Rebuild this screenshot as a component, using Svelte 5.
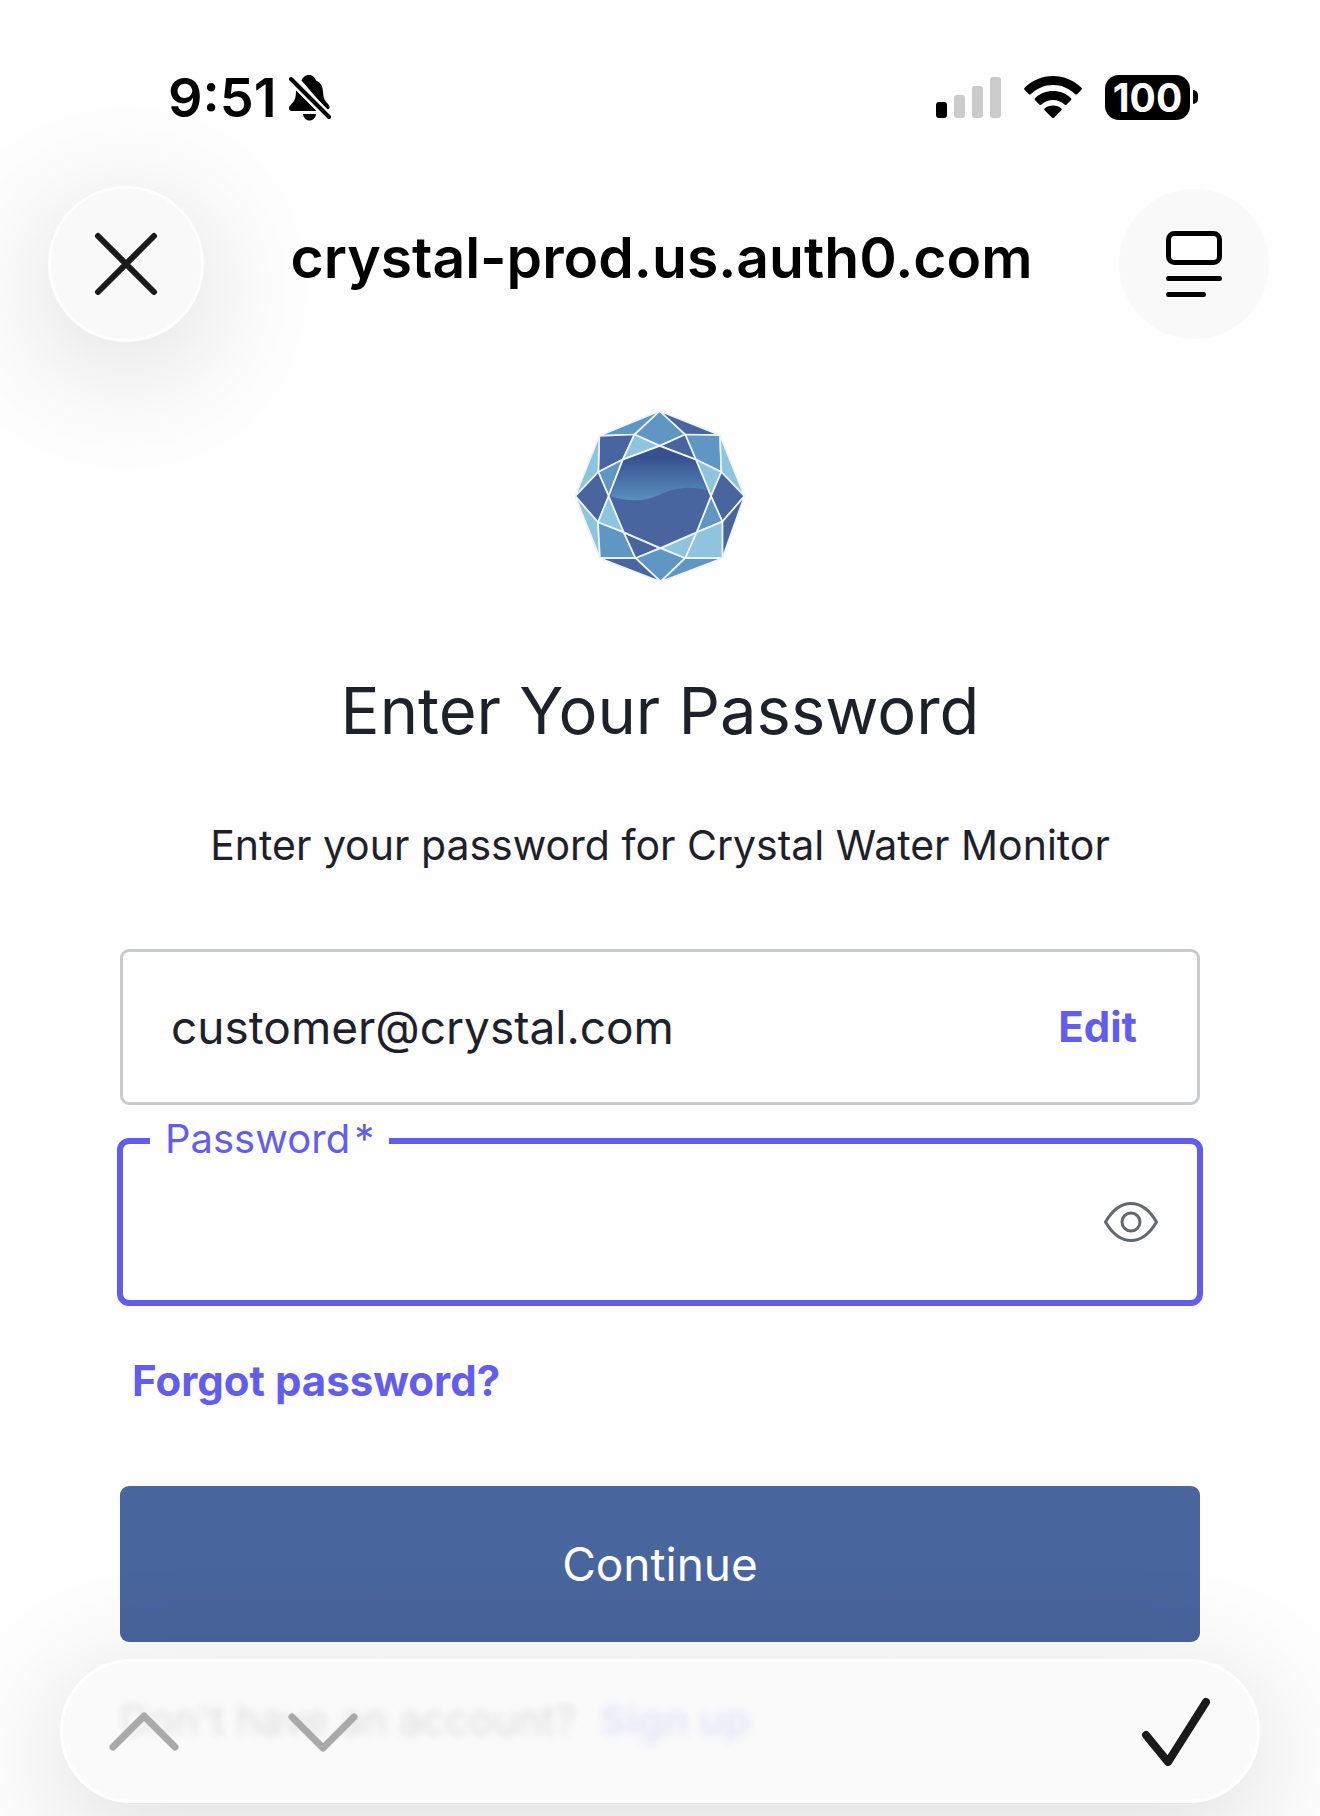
<script lang="ts">
  interface Facet {
    points: string;
    tone: 'deep' | 'mid' | 'pale';
  }

  const facets: Facet[] = [
    // crown
    { points: '300,48 225,118 300,152 376,118', tone: 'mid' },
    { points: '120,122 300,48 225,118', tone: 'mid' },
    { points: '300,48 480,120 376,118', tone: 'deep' },
    { points: '120,122 225,118 190,193 117,230', tone: 'deep' },
    { points: '376,118 480,120 484,230 408,193', tone: 'mid' },
    { points: '225,118 300,152 190,193', tone: 'pale' },
    { points: '300,152 376,118 408,193', tone: 'deep' },
    // sides
    { points: '48,302 120,122 117,230', tone: 'pale' },
    { points: '480,120 553,302 484,230', tone: 'pale' },
    { points: '190,193 117,230 148,302', tone: 'mid' },
    { points: '408,193 484,230 453,302', tone: 'pale' },
    { points: '48,302 117,230 148,302 116,380', tone: 'deep' },
    { points: '453,302 484,230 553,302 487,378', tone: 'deep' },
    { points: '48,302 116,380 122,487', tone: 'pale' },
    { points: '553,302 487,378 487,487', tone: 'deep' },
    { points: '148,302 116,380 193,410', tone: 'pale' },
    { points: '453,302 487,378 410,410', tone: 'mid' },
    // base
    { points: '116,380 193,410 228,487 122,487', tone: 'mid' },
    { points: '410,410 487,378 487,487 376,487', tone: 'pale' },
    { points: '193,410 228,487 302,457', tone: 'deep' },
    { points: '302,457 410,410 376,487', tone: 'pale' },
    { points: '228,487 302,457 376,487 303,557', tone: 'mid' },
    { points: '122,487 228,487 303,557', tone: 'deep' },
    { points: '303,557 376,487 487,487', tone: 'mid' },
  ];

  let email = 'customer@crystal.com';
  let password = $state('');
  let visible = $state(false);
</script>

<div class="screen">
  <header class="status-bar">
    <div class="clock">
      <span class="time">9:51</span>
      <svg class="bell" viewBox="0 0 42 46" aria-hidden="true">
        <path d="M20 0c-4 0-6.500 2.500-7.500 5.500L38 35c2.500-1 3.500-3 1.500-5.500-4-4-5-6-5.500-13C33.500 10 31 7 27 5.500 26 2.500 24 0 20 0z" />
        <path d="M7 15L28 36H3c-3.500 0-4-4-1-6.500C6 25.500 7 23 7 15z" />
        <path d="M14 39h13c-.5 4-3 6.500-6.500 6.500S14.500 43 14 39z" />
        <path class="slash-gap" d="M2 4L40 42" />
        <path class="slash" d="M2 4L40 42" />
      </svg>
    </div>
    <div class="indicators">
      <svg class="signal" viewBox="0 0 65 42" aria-hidden="true">
        <rect x="0" y="26" width="11" height="16" rx="3" />
        <rect class="off" x="18" y="19" width="11" height="23" rx="3" />
        <rect class="off" x="36" y="10" width="11" height="32" rx="3" />
        <rect class="off" x="54" y="1" width="11" height="41" rx="3" />
      </svg>
      <svg class="wifi" viewBox="0 0 58 42" aria-hidden="true">
        <path d="M29 0C18 0 8 4.500.8 11.500c-.9.9-.9 1.600-.1 2.400l4 4c.7.7 1.500.7 2.300 0C12.900 12.400 20.500 9 29 9s16.100 3.400 22 8.900c.8.700 1.600.7 2.300 0l4-4c.8-.8.8-1.500-.1-2.400C50 4.500 40 0 29 0z" />
        <path d="M29 15c-7 0-13 2.600-17.700 6.900-.9.800-.9 1.600-.1 2.400l4.100 4.100c.7.7 1.400.7 2.200.1C20.600 25.700 24.600 24 29 24s8.400 1.700 11.500 4.500c.8.600 1.500.6 2.200-.1l4.100-4.100c.8-.8.8-1.600-.1-2.400C42 17.600 36 15 29 15z" />
        <path d="M29 29.500c-3.300 0-6 1-8.100 2.700-.9.700-.9 1.500-.1 2.300l7 7c.8.7 1.600.7 2.400 0l7-7c.8-.8.8-1.600-.1-2.300-2.100-1.700-4.800-2.700-8.100-2.700z" />
      </svg>
      <div class="battery">
        <span class="charge">100</span>
        <span class="nub"></span>
      </div>
    </div>
  </header>

  <nav class="browser-bar">
    <button class="round close" aria-label="Close">
      <svg width="64" height="64" viewBox="0 0 64 64" aria-hidden="true">
        <path d="M4 4L60 60M60 4L4 60" />
      </svg>
    </button>
    <span class="host">crystal-prod.us.auth0.com</span>
    <button class="round reader" aria-label="Page menu">
      <svg width="56" height="66" viewBox="0 0 56 66" aria-hidden="true">
        <rect x="2.500" y="2.500" width="51" height="29" rx="6" />
        <path d="M2.500 47.500H53.500M2.500 63.500H37.500" />
      </svg>
    </button>
  </nav>

  <main>
    <svg class="logo" viewBox="48 48 506 510" role="img" aria-label="Crystal">
      <defs>
        <linearGradient id="water" x1="0" y1="0" x2="0" y2="1">
          <stop offset="0.200" stop-color="#37518f" />
          <stop offset="1" stop-color="#5890be" />
        </linearGradient>
      </defs>
      <g class="facets">
        {#each facets as facet}
          <polygon class={facet.tone} points={facet.points} />
        {/each}
        <polygon class="deep" points="300,152 408,193 453,302 410,410 302,457 193,410 148,302 190,193" />
      </g>
      <path
        fill="url(#water)"
        d="M300 156L405 196L440 285C400 272 345 275 302 297C255 320 200 318 154 302L193 196Z"
      />
    </svg>

    <h1>Enter Your Password</h1>
    <p class="lead">Enter your password for Crystal Water Monitor</p>

    <form onsubmit={(e) => e.preventDefault()}>
      <div class="identity">
        <input class="email" type="text" value={email} readonly aria-label="Email address" />
        <a class="link" href="#edit">Edit</a>
      </div>

      <div class="field">
        <label for="password">Password<span class="required">*</span></label>
        <input id="password" type={visible ? 'text' : 'password'} bind:value={password} />
        <button type="button" class="reveal" aria-label="Show password" onclick={() => (visible = !visible)}>
          <svg width="54" height="40" viewBox="0 0 54 40" aria-hidden="true">
            <path d="M1.500 20C8.500 8 17 1.500 27 1.500S45.500 8 52.500 20C45.500 32 37 38.500 27 38.500S8.500 32 1.500 20z" />
            <circle cx="27" cy="20" r="9" />
          </svg>
        </button>
      </div>

      <a class="link forgot" href="#reset">Forgot password?</a>
      <button class="submit" type="submit">Continue</button>
    </form>

    <p class="signup">Don't have an account? <a class="link" href="#signup">Sign up</a></p>
  </main>

  <!-- floating keyboard accessory bar, the page shows faintly through it -->
  <div class="accessory">
    <button class="step" aria-label="Previous field" disabled>
      <svg width="70" height="40" viewBox="0 0 70 40" aria-hidden="true">
        <path d="M4 36L35 5L66 36" />
      </svg>
    </button>
    <button class="step" aria-label="Next field" disabled>
      <svg width="70" height="42" viewBox="0 0 70 42" aria-hidden="true">
        <path d="M4 7L35 38L66 7" />
      </svg>
    </button>
    <button class="done" aria-label="Done">
      <svg width="70" height="72" viewBox="0 0 70 72" aria-hidden="true">
        <path d="M5 40L27 67L65 7" />
      </svg>
    </button>
  </div>
</div>

<style>
  :global(body) {
    background: #fefefe;
  }

  .screen {
    font-family: Inter, 'Liberation Sans', sans-serif;
    color: #1e212a;
  }

  button {
    display: flex;
    align-items: center;
    justify-content: center;
    padding: 0;
    border: none;
    background: none;
    font-family: inherit;
    cursor: pointer;
  }

  svg {
    display: block;
  }

  .status-bar {
    display: flex;
    justify-content: space-between;
    align-items: center;
    height: 48px;
    padding: 73px 122px 0 168px;
    color: #000;
  }

  .clock {
    display: flex;
    align-items: center;
    gap: 12px;
    padding-top: 2px;
  }

  .time {
    font-size: 54px;
    font-weight: 600;
    line-height: 48px;
  }

  .bell {
    width: 42px;
    height: 46px;
  }

  .slash-gap {
    stroke: #fefefe;
    stroke-width: 9;
  }

  .slash {
    stroke: #000;
    stroke-width: 4;
    stroke-linecap: round;
  }

  .indicators {
    display: flex;
    align-items: center;
    gap: 23px;
  }

  .signal {
    width: 65px;
    height: 42px;
  }

  .signal .off {
    fill: #cbcbcb;
  }

  .wifi {
    width: 58px;
    height: 42px;
  }

  .battery {
    display: flex;
    align-items: center;
    gap: 3px;
  }

  .charge {
    width: 85px;
    border-radius: 14px;
    background: #000;
    color: #fff;
    font-size: 39px;
    font-weight: 700;
    line-height: 45px;
    text-align: center;
  }

  .nub {
    width: 5px;
    height: 14px;
    border-radius: 0 5px 5px 0;
    background: #000;
  }

  .browser-bar {
    display: flex;
    align-items: center;
    justify-content: space-between;
    padding: 65px 51px 0 48px;
  }

  .round {
    flex-shrink: 0;
    box-sizing: border-box;
    border-radius: 50%;
    background: #f9f9f9;
  }

  .round svg {
    fill: none;
    stroke: #000;
    stroke-width: 5;
    stroke-linecap: round;
  }

  .close {
    width: 156px;
    height: 156px;
    border: 3px solid #fff;
    box-shadow: 0 24px 120px 6px rgba(0, 0, 0, 0.13);
  }

  .close svg {
    stroke: #1a1a1a;
    stroke-width: 6;
  }

  .reader {
    width: 150px;
    height: 150px;
  }

  .reader rect {
    fill: #fefefe;
  }

  .host {
    padding-bottom: 12px;
    color: #000;
    font-size: 57px;
    font-weight: 600;
    line-height: 72px;
  }

  main {
    display: flex;
    flex-direction: column;
    padding: 69px 120px 0;
  }

  .logo {
    align-self: center;
    width: 170px;
    height: 171px;
  }

  .facets {
    stroke: #edf4fb;
    stroke-width: 5;
    stroke-linejoin: round;
  }

  .deep {
    fill: #49659f;
  }

  .mid {
    fill: #5f96c4;
  }

  .pale {
    fill: #8fc4de;
  }

  h1 {
    margin: 84px 0 0;
    font-size: 65px;
    font-weight: 400;
    line-height: 90px;
    text-align: center;
  }

  .lead {
    margin: 59px 0 0;
    font-size: 41px;
    line-height: 60px;
    text-align: center;
  }

  form {
    display: flex;
    flex-direction: column;
    margin-top: 74px;
  }

  .identity {
    display: flex;
    align-items: center;
    justify-content: space-between;
    box-sizing: border-box;
    height: 156px;
    padding: 0 60px 0 48px;
    border: 3px solid #c9cace;
    border-radius: 9px;
  }

  .email {
    flex: 1;
    min-width: 0;
    padding: 0;
    border: none;
    outline: none;
    background: transparent;
    color: inherit;
    font-family: inherit;
    font-size: 46px;
    line-height: 60px;
  }

  .link {
    color: #635dee;
    font-size: 42px;
    font-weight: 700;
    line-height: 60px;
    text-decoration: none;
  }

  .field {
    position: relative;
    display: flex;
    align-items: center;
    box-sizing: border-box;
    height: 168px;
    margin: 33px -3px 0;
    padding: 0 39px 0 48px;
    border: 6px solid #635dee;
    border-radius: 12px;
  }

  /* sits across the top border */
  .field label {
    position: absolute;
    top: -35px;
    left: 27px;
    padding: 0 15px;
    background: #fefefe;
    color: #635dee;
    font-size: 40px;
    line-height: 60px;
  }

  .required {
    margin-left: 4px;
  }

  .field input {
    flex: 1;
    min-width: 0;
    padding: 0;
    border: none;
    outline: none;
    background: transparent;
    font-family: inherit;
    font-size: 46px;
  }

  .reveal svg {
    fill: none;
    stroke: #65676e;
    stroke-width: 3;
  }

  .forgot {
    align-self: flex-start;
    margin: 45px 0 0 12px;
  }

  .submit {
    height: 156px;
    margin-top: 75px;
    border-radius: 9px;
    background: #49659d;
    color: #fff;
    font-size: 46px;
  }

  .signup {
    margin: 48px 0 0;
    font-size: 41px;
    line-height: 60px;
  }

  .signup .link {
    margin-left: 12px;
    font-size: 41px;
  }

  .accessory {
    position: fixed;
    right: 60px;
    bottom: 13px;
    left: 60px;
    display: flex;
    align-items: center;
    box-sizing: border-box;
    height: 144px;
    padding: 0 46px;
    border: 3px solid #fff;
    border-radius: 72px;
    background: rgba(249, 249, 249, 0.87);
    backdrop-filter: blur(4px);
    box-shadow: 0 24px 120px 6px rgba(0, 0, 0, 0.13);
  }

  .accessory svg {
    fill: none;
    stroke-linecap: round;
    stroke-linejoin: round;
  }

  .step {
    margin-right: 109px;
  }

  .step svg {
    stroke: #a9a9a9;
    stroke-width: 7;
  }

  .done {
    margin-left: auto;
  }

  .done svg {
    stroke: #1a1a1a;
    stroke-width: 8;
  }
</style>
